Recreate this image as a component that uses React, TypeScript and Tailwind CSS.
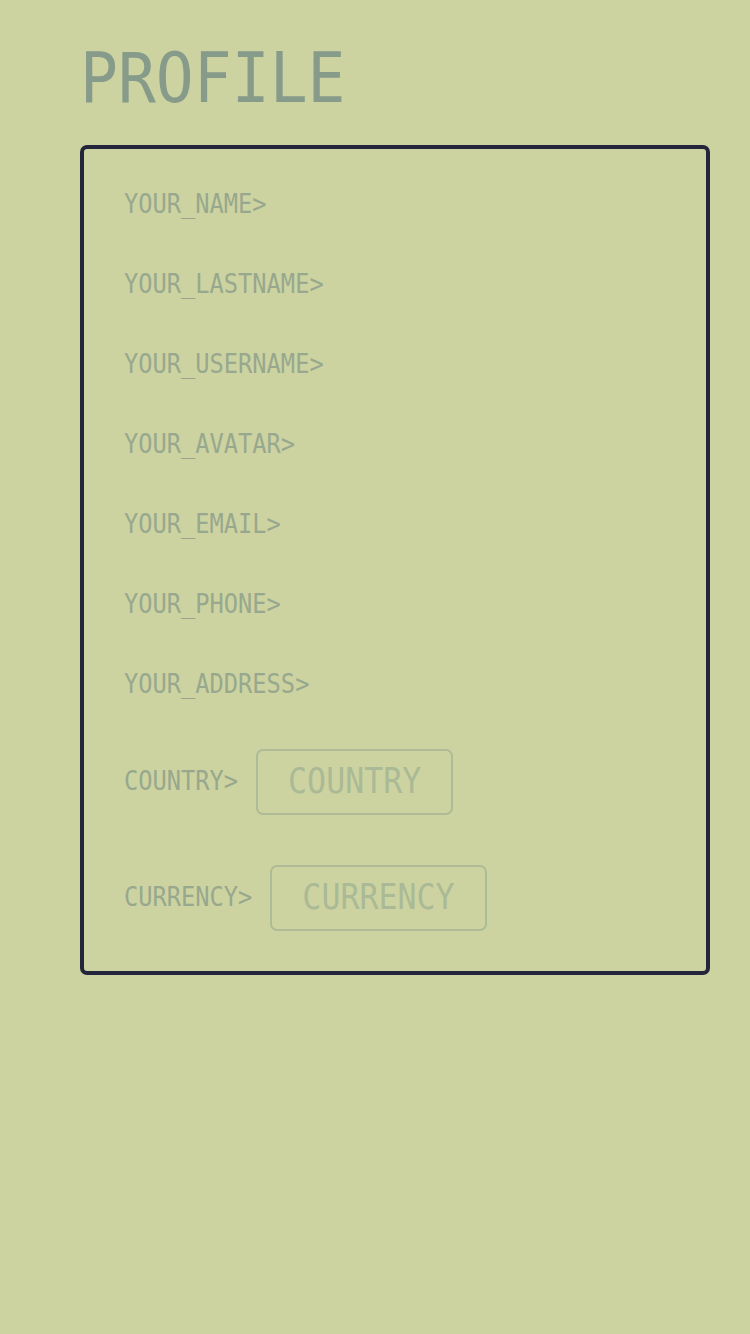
import React from "react";

const labels = [
  "YOUR_NAME>",
  "YOUR_LASTNAME>",
  "YOUR_USERNAME>",
  "YOUR_AVATAR>",
  "YOUR_EMAIL>",
  "YOUR_PHONE>",
  "YOUR_ADDRESS>",
];

export default function App() {
  return (
    <div
      className="min-h-[1334px] w-[750px] bg-[#cdd3a0] pl-[80px] pr-[40px] pt-[47px]"
      style={{ fontFamily: '"DejaVu Sans Mono", "Liberation Mono", monospace' }}
    >
      <h1 className="h-[63px] text-[63px] leading-[63px] text-[#879b8b]">
        <span className="inline-block scale-y-[1.09]">PROFILE</span>
      </h1>
      <div className="mt-[35px] rounded-[7px] border-4 border-[#24243a] px-[40px] pt-[16px] pb-[40px]">
        {labels.map((l) => (
          <div key={l} className="flex h-[80px] items-center text-[23.7px] text-[#97a88e]">
            <span className="inline-block scale-y-[1.12]">{l}</span>
          </div>
        ))}
        <div className="mt-[24px] flex h-[66px] items-center">
          <span className="inline-block scale-y-[1.12] text-[23.7px] text-[#97a88e]">COUNTRY&gt;</span>
          <div className="ml-[18px] flex h-[66px] items-center rounded-[7px] border-2 border-[#adbb97] px-[30px] text-[31.6px] text-[#aab996]">
            <span className="inline-block scale-y-[1.12]">COUNTRY</span>
          </div>
        </div>
        <div className="mt-[50px] flex h-[66px] items-center">
          <span className="inline-block scale-y-[1.12] text-[23.7px] text-[#97a88e]">CURRENCY&gt;</span>
          <div className="ml-[18px] flex h-[66px] items-center rounded-[7px] border-2 border-[#adbb97] px-[30px] text-[31.6px] text-[#aab996]">
            <span className="inline-block scale-y-[1.12]">CURRENCY</span>
          </div>
        </div>
      </div>
    </div>
  );
}
